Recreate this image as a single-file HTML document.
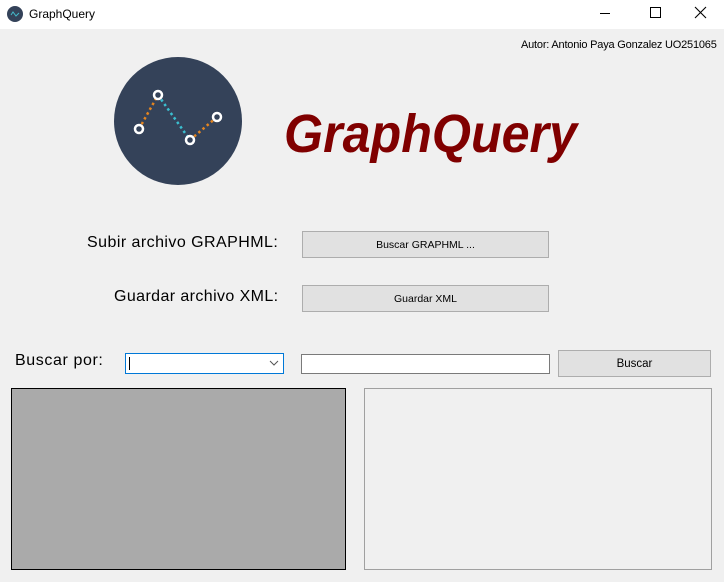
<!DOCTYPE html>
<html><head><meta charset="utf-8"><style>
*{margin:0;padding:0;box-sizing:border-box}
body{width:724px;height:582px;background:#f0f0f0;font-family:"Liberation Sans",sans-serif;position:relative;overflow:hidden}
.a{position:absolute}
.btn{position:absolute;background:#e1e1e1;border:1px solid #adadad;font-size:10.5px;color:#000;display:flex;align-items:center;justify-content:center}
.lbl{position:absolute;font-size:16px;color:#000;white-space:nowrap}
</style></head><body>
<div class="a" style="left:0;top:0;width:724px;height:29px;background:#fff"></div>
<svg class="a" style="left:7px;top:6px" width="16" height="16"><circle cx="8" cy="8" r="8" fill="#344259"/><path d="M4 9 L6 6 L9 10 L12 7" stroke="#4bc" stroke-width="1" fill="none"/></svg>
<div class="a" style="left:29px;top:7px;font-size:12px">GraphQuery</div>
<div class="a" style="left:600px;top:13px;width:10px;height:1px;background:#000"></div>
<div class="a" style="left:650px;top:7px;width:11px;height:11px;border:1px solid #000"></div>
<svg class="a" style="left:694px;top:6px" width="13" height="13"><path d="M1 1L12 12M12 1L1 12" stroke="#000" stroke-width="1.1"/></svg>
<div class="a" style="left:521px;top:39px;font-size:11px;white-space:nowrap;letter-spacing:-0.2px">Autor: Antonio Paya Gonzalez UO251065</div>
<svg class="a" style="left:114px;top:57px" width="128" height="128">
<circle cx="64" cy="64" r="64" fill="#344259"/>
<path d="M25 72 L44 38" stroke="#e5851f" stroke-width="2.5" stroke-dasharray="2.5 3"/>
<path d="M44 38 L76 83" stroke="#3bbfd0" stroke-width="2.5" stroke-dasharray="2.5 3"/>
<path d="M76 83 L103 60" stroke="#e5851f" stroke-width="2.5" stroke-dasharray="2.5 3"/>
<g fill="#344259" stroke="#fff" stroke-width="2.5"><circle cx="25" cy="72" r="4"/><circle cx="44" cy="38" r="4"/><circle cx="76" cy="83" r="4"/><circle cx="103" cy="60" r="4"/></g>
</svg>
<div class="a" style="left:284px;top:103px;font-size:54px;font-weight:bold;font-style:italic;color:#800000;line-height:62px;white-space:nowrap;transform:scaleX(0.93);transform-origin:0 0">GraphQuery</div>
<div class="lbl" style="left:87px;top:234px;letter-spacing:0.45px">Subir archivo GRAPHML:</div>
<div class="btn" style="left:302px;top:231px;width:247px;height:27px">Buscar GRAPHML ...</div>
<div class="lbl" style="left:114px;top:288px;letter-spacing:0.4px">Guardar archivo XML:</div>
<div class="btn" style="left:302px;top:285px;width:247px;height:27px">Guardar XML</div>
<div class="lbl" style="left:15px;top:352px;letter-spacing:0.6px">Buscar por:</div>
<div class="a" style="left:125px;top:353px;width:159px;height:21px;background:#fff;border:1px solid #0078d7"></div>
<div class="a" style="left:129px;top:357px;width:1px;height:13px;background:#000"></div>
<svg class="a" style="left:269px;top:360px" width="10" height="6"><path d="M1 1L5 5L9 1" stroke="#555" fill="none"/></svg>
<div class="a" style="left:301px;top:354px;width:249px;height:20px;background:#fff;border:1px solid #7a7a7a"></div>
<div class="btn" style="left:558px;top:350px;width:153px;height:27px;font-size:11.5px">Buscar</div>
<div class="a" style="left:11px;top:388px;width:335px;height:182px;background:#aaa;border:1px solid #000"></div>
<div class="a" style="left:364px;top:388px;width:348px;height:182px;background:#f0f0f0;border:1px solid #a0a0a0"></div>
</body></html>
